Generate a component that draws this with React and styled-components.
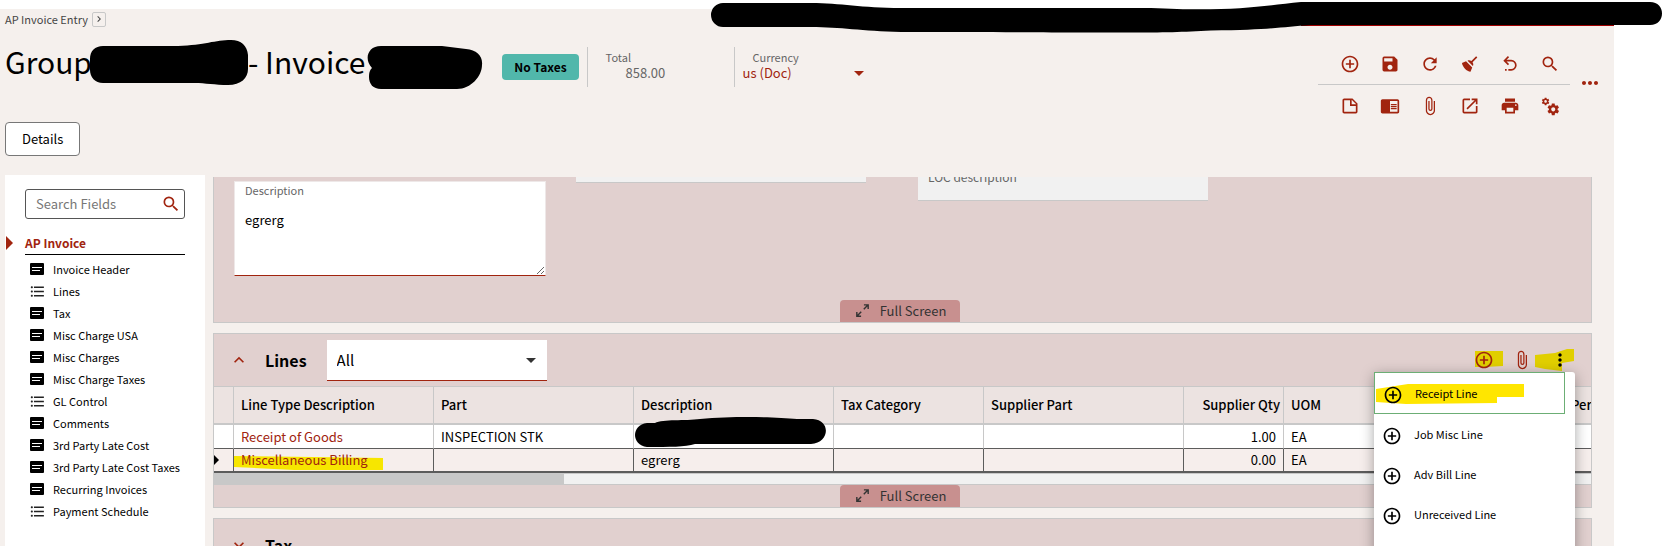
import React from 'react';
import styled, { createGlobalStyle, css } from 'styled-components';
import {
    MdAddCircleOutline,
    MdArrowDropDown,
    MdAttachFile,
    MdChevronRight,
    MdChromeReaderMode,
    MdExpandLess,
    MdExpandMore,
    MdFormatListBulleted,
    MdMoreHoriz,
    MdMoreVert,
    MdOpenInNew,
    MdPrint,
    MdRefresh,
    MdSave,
    MdSearch,
} from 'react-icons/md';

const red = '#a1240f';
const rose = '#e1d0cf';
const line = '#c8c8c8';

const GlobalStyle = createGlobalStyle`
    * {
        box-sizing: border-box;
    }
    body {
        margin: 0;
        background: #fff;
        color: #000;
        font-family: "Noto Sans CJK SC", "Noto Sans", sans-serif;
        font-size: 13px;
        line-height: 16px;
    }
    button, input, select, textarea {
        font: inherit;
        color: inherit;
    }
    button {
        padding: 0;
        border: 0;
        background: none;
        cursor: pointer;
    }
    svg {
        display: block;
        flex: none;
    }
`

/* icons that the icon package has no match for */
const makeIcon = (d) => ({ size = 20 }) => (
    <svg width={size} height={size} viewBox="0 0 24 24" fill="currentColor" aria-hidden="true">
        <path d={d} />
    </svg>
);

const BroomIcon = makeIcon('M19.36,2.72L20.78,4.14L15.06,9.85C16.13,11.39 16.28,13.24 15.38,14.44L9.06,8.12C10.26,7.22 12.11,7.37 13.65,8.44L19.36,2.72M5.93,17.57C3.92,15.56 2.69,13.16 2.35,10.92L7.23,8.83L14.67,16.27L12.58,21.15C10.34,20.81 7.94,19.58 5.93,17.57Z');
const UndoIcon = makeIcon('M13.5,7A6.5,6.5 0 0,1 20,13.5A6.5,6.5 0 0,1 13.5,20H10V18H13.5C16,18 18,16 18,13.5C18,11 16,9 13.5,9H7.83L10.91,12.09L9.5,13.5L4,8L9.5,2.5L10.92,3.91L7.83,7H13.5M6,18H8V20H6V18Z');
const NoteIcon = makeIcon('M14,10H19.5L14,4.5V10M5,3H15L21,9V19A2,2 0 0,1 19,21H5C3.89,21 3,20.1 3,19V5C3,3.89 3.89,3 5,3M5,5V19H19V12H12V5H5Z');
const CogsIcon = makeIcon('M15.9,18.45C17.25,18.45 18.35,17.35 18.35,16C18.35,14.65 17.25,13.55 15.9,13.55C14.54,13.55 13.45,14.65 13.45,16C13.45,17.35 14.54,18.45 15.9,18.45M21.1,16.68L22.58,17.84C22.71,17.95 22.75,18.13 22.66,18.29L21.26,20.71C21.17,20.86 21,20.92 20.83,20.86L19.09,20.16C18.73,20.44 18.33,20.67 17.91,20.85L17.64,22.7C17.62,22.87 17.47,23 17.3,23H14.5C14.32,23 14.18,22.87 14.15,22.7L13.89,20.85C13.46,20.67 13.07,20.44 12.71,20.16L10.96,20.86C10.81,20.92 10.62,20.86 10.54,20.71L9.14,18.29C9.05,18.13 9.09,17.95 9.22,17.84L10.7,16.68L10.65,16L10.7,15.31L9.22,14.16C9.09,14.05 9.05,13.86 9.14,13.71L10.54,11.29C10.62,11.13 10.81,11.07 10.96,11.13L12.71,11.84C13.07,11.56 13.46,11.32 13.89,11.15L14.15,9.29C14.18,9.13 14.32,9 14.5,9H17.3C17.47,9 17.62,9.13 17.64,9.29L17.91,11.15C18.33,11.32 18.73,11.56 19.09,11.84L20.83,11.13C21,11.07 21.17,11.13 21.26,11.29L22.66,13.71C22.75,13.86 22.71,14.05 22.58,14.16L21.1,15.31L21.15,16L21.1,16.68M6.69,8.07C7.56,8.07 8.26,7.37 8.26,6.5C8.26,5.63 7.56,4.92 6.69,4.92A1.58,1.58 0 0,0 5.11,6.5C5.11,7.37 5.82,8.07 6.69,8.07M10.03,6.94L11,7.68C11.07,7.75 11.09,7.87 11.03,7.97L10.13,9.53C10.08,9.63 9.96,9.67 9.86,9.63L8.74,9.18L8,9.62L7.81,10.81C7.79,10.92 7.7,11 7.59,11H5.79C5.67,11 5.58,10.92 5.56,10.81L5.4,9.62L4.64,9.18L3.52,9.63C3.41,9.67 3.3,9.63 3.24,9.53L2.34,7.97C2.28,7.87 2.31,7.75 2.39,7.68L3.34,6.94L3.31,6.5L3.34,6.06L2.39,5.32C2.31,5.25 2.28,5.13 2.34,5.03L3.24,3.47C3.3,3.37 3.41,3.33 3.52,3.38L4.63,3.82L5.4,3.38L5.56,2.19C5.58,2.08 5.67,2 5.79,2H7.59C7.7,2 7.79,2.08 7.81,2.19L8,3.38L8.74,3.82L9.86,3.38C9.96,3.33 10.08,3.37 10.13,3.47L11.03,5.03C11.09,5.13 11.07,5.25 11,5.32L10.03,6.06L10.06,6.5L10.03,6.94Z');
const ExpandIcon = makeIcon('M10,21V19H6.41L10.91,14.5L9.5,13.09L5,17.59V14H3V21H10M14.5,10.91L19,6.41V10H21V3H14V5H17.59L13.09,9.5L14.5,10.91Z');

const CardIcon = () => (
    <svg width="14" height="12" viewBox="0 0 14 12" aria-hidden="true">
        <rect width="14" height="12" rx="1" fill="#000" />
        <path d="M2 4.500h10M2 7.500h8" stroke="#fff" />
    </svg>
);

const topTools = [
    ['New', MdAddCircleOutline],
    ['Save', MdSave],
    ['Refresh', MdRefresh],
    ['Clear', BroomIcon],
    ['Undo', UndoIcon],
    ['Search', MdSearch],
];
const bottomTools = [
    ['Memo', NoteIcon],
    ['Reader', MdChromeReaderMode],
    ['Attachments', MdAttachFile],
    ['Open in new window', MdOpenInNew],
    ['Print', MdPrint],
    ['Settings', CogsIcon],
];

const sections = [
    { name: 'Invoice Header' },
    { name: 'Lines', list: true },
    { name: 'Tax' },
    { name: 'Misc Charge USA' },
    { name: 'Misc Charges' },
    { name: 'Misc Charge Taxes' },
    { name: 'GL Control', list: true },
    { name: 'Comments' },
    { name: '3rd Party Late Cost' },
    { name: '3rd Party Late Cost Taxes' },
    { name: 'Recurring Invoices' },
    { name: 'Payment Schedule', list: true },
];

const menuLines = ['Receipt Line', 'Job Misc Line', 'Adv Bill Line', 'Unreceived Line'];

export default function App() {
    return (
        <Page>
            <GlobalStyle />
            <TopRedaction width="951" height="36" viewBox="0 0 951 36" aria-hidden="true">
                <path d="M590 25.5H903" stroke="#a00000" />
                <path d="M12 3H100C130 3 150 8 190 8H440C520 12 550 6 590 2H939C955 2 955 25 939 25H600C570 27 560 30 500 30.500C440 34 420 32 190 32C150 31 130 27 100 27H12A12 12 0 0 1 12 3Z" />
            </TopRedaction>
            <Shell>
                <Header />
                <Body>
                    <Sidebar />
                    <Main>
                        <InvoicePanel />
                        <LinesPanel />
                        <Panel>
                            <PanelHeader>
                                <Toggle aria-label="Expand Tax"><MdExpandMore size={20} /></Toggle>
                                <PanelTitle>Tax</PanelTitle>
                            </PanelHeader>
                        </Panel>
                    </Main>
                </Body>
            </Shell>
        </Page>
    );
}

const Page = styled.div`
    position: relative;
    display: flex;
    height: 100vh;
    overflow: hidden;
    padding: 9px 48px 0 0;
`
const TopRedaction = styled.svg`
    position: absolute;
    top: 0;
    right: 0;
    z-index: 5;
`
const Shell = styled.div`
    display: flex;
    flex: 1;
    flex-direction: column;
    min-width: 0;
    background: #f5f0ed;
`

const Header = () => (
    <HeaderBox>
        <HeaderLeft>
            <Breadcrumb>
                AP Invoice Entry
                <CrumbButton aria-label="Show path"><MdChevronRight size={12} /></CrumbButton>
            </Breadcrumb>
            <TitleRow>
                <Title>
                    <span>Group</span>
                    <TitleRedaction width="158" height="54" viewBox="0 0 158 54" aria-hidden="true">
                        <path d="M13 6H88C115 5 125 0 141 0C153 0 159 8 158 20V29C158 38 151 45 138 45C125 45 115 43 105 43H13C5 43 0 37 0 30V19C0 11 5 6 13 6Z" />
                    </TitleRedaction>
                    <span>- Invoice</span>
                    <TitleRedaction $apart width="116" height="54" viewBox="0 0 116 54" aria-hidden="true">
                        <path d="M14 6H75L99 9C110 10 116 16 115 25C115 36 104 49 90 49H14C6 49 2 44 2 37C2 32 3 30 5 28C-3 20 0 6 14 6Z" />
                    </TitleRedaction>
                </Title>
                <Badge>No Taxes</Badge>
                <Fact>
                    <FactLabel>Total</FactLabel>
                    <FactValue>858.00</FactValue>
                </Fact>
                <Fact>
                    <FactLabel as="label" htmlFor="currency">Currency</FactLabel>
                    <CurrencyBox>
                        <CurrencySelect id="currency"><option>us (Doc)</option></CurrencySelect>
                        <MdArrowDropDown size={24} />
                    </CurrencyBox>
                </Fact>
            </TitleRow>
            <DetailsButton>Details</DetailsButton>
        </HeaderLeft>
        <Tools>
            <ToolRows>
                <ToolRow>
                    {topTools.map(([name, Icon]) => (
                        <ToolButton key={name} aria-label={name}><Icon size={20} /></ToolButton>
                    ))}
                </ToolRow>
                <ToolRow $divided>
                    {bottomTools.map(([name, Icon]) => (
                        <ToolButton key={name} aria-label={name}><Icon size={20} /></ToolButton>
                    ))}
                </ToolRow>
            </ToolRows>
            <MoreButton aria-label="More"><MdMoreHoriz size={24} /></MoreButton>
        </Tools>
    </HeaderBox>
);

const HeaderBox = styled.header`
    display: flex;
    justify-content: space-between;
    align-items: flex-start;
    padding: 2px 12px 19px 5px;
`
const HeaderLeft = styled.div`
    display: flex;
    flex-direction: column;
    align-items: flex-start;
`
const Breadcrumb = styled.nav`
    display: flex;
    align-items: center;
    gap: 4px;
    color: #444;
    font-size: 11px;
`
const CrumbButton = styled.button`
    display: grid;
    place-items: center;
    width: 14px;
    height: 15px;
    border: 1px solid ${line};
    border-radius: 2px;
`
const TitleRow = styled.div`
    display: flex;
    align-items: center;
    height: 40px;
    margin: 20px 0 35px;
`
const Title = styled.h1`
    display: flex;
    align-items: center;
    margin: 0 19px 0 0;
    font-size: 30px;
    font-weight: 400;
    line-height: 30px;
    white-space: nowrap;
    span {
        padding-bottom: 12px;
    }
`
const TitleRedaction = styled.svg`
    z-index: 1;
    margin-left: ${(props) => (props.$apart ? 2 : -2)}px;
`
const Badge = styled.span`
    margin-right: 8px;
    padding: 5px 12px;
    border-radius: 4px;
    background: #51b7ab;
    font-size: 12px;
    font-weight: 700;
`
const Fact = styled.div`
    display: flex;
    flex-direction: column;
    width: 147px;
    height: 40px;
    padding: 3px 8px;
    border-left: 1px solid ${line};
    color: #666;
`
const FactLabel = styled.span`
    padding-left: 10px;
    font-size: 11px;
    line-height: 14px;
`
const FactValue = styled.span`
    padding-left: 30px;
    line-height: 18px;
`
const CurrencyBox = styled.div`
    display: flex;
    align-items: center;
    height: 18px;
    color: ${red};
`
const CurrencySelect = styled.select`
    width: 104px;
    padding: 0;
    border: 0;
    background: none;
    appearance: none;
`
const DetailsButton = styled.button`
    padding: 8px 16px;
    border: 1px solid #777;
    border-radius: 4px;
    background: #fff;
`
const Tools = styled.div`
    display: flex;
    align-items: center;
    gap: 8px;
    padding-top: 32px;
    color: ${red};
`
const ToolRows = styled.div`
    display: flex;
    flex-direction: column;
`
const ToolRow = styled.div`
    display: flex;
    padding-left: 12px;
    border-top: ${(props) => (props.$divided ? `1px solid ${line}` : '0')};
`
const ToolButton = styled.button`
    display: grid;
    place-items: center;
    width: 40px;
    height: 41px;
`
const MoreButton = styled.button`
    width: 24px;
    height: 24px;
    margin-bottom: 4px;
`

const Body = styled.div`
    display: flex;
    flex: 1;
    min-height: 0;
`

const Sidebar = () => (
    <SideBox>
        <SearchBox>
            <SearchInput aria-label="Search Fields" placeholder="Search Fields" />
            <MdSearch size={20} />
        </SearchBox>
        <SideTitle href="#ap-invoice">
            <svg width="7" height="14" viewBox="0 0 7 14" aria-hidden="true">
                <path d="M0 0L7 7L0 14Z" fill="currentColor" />
            </svg>
            <span>AP Invoice</span>
        </SideTitle>
        <SideList>
            {sections.map(({ name, list }) => (
                <li key={name}>
                    <SideLink href="#section">
                        <SideIcon>{list ? <MdFormatListBulleted size={17} /> : <CardIcon />}</SideIcon>
                        {name}
                    </SideLink>
                </li>
            ))}
        </SideList>
    </SideBox>
);

const SideBox = styled.aside`
    flex: none;
    width: 200px;
    margin-left: 5px;
    padding: 14px 20px 0;
    background: #fff;
`
const SearchBox = styled.div`
    display: flex;
    align-items: center;
    height: 30px;
    padding: 0 3px 0 10px;
    border: 1px solid #555;
    border-radius: 3px;
    color: ${red};
`
const SearchInput = styled.input`
    flex: 1;
    min-width: 0;
    padding: 0;
    border: 0;
    outline: 0;
    color: #333;
    &::placeholder {
        color: #777;
    }
`
const SideTitle = styled.a`
    display: flex;
    align-items: center;
    gap: 12px;
    height: 24px;
    margin: 12px 0 3px -19px;
    color: ${red};
    font-size: 12px;
    font-weight: 700;
    text-decoration: none;
    span {
        flex: 1;
        line-height: 23px;
        border-bottom: 1px solid #000;
    }
`
const SideList = styled.ul`
    margin: 0;
    padding: 0 0 0 5px;
    list-style: none;
`
const SideLink = styled.a`
    display: flex;
    align-items: center;
    gap: 9px;
    height: 22px;
    color: #000;
    font-size: 11px;
    text-decoration: none;
    white-space: nowrap;
`
const SideIcon = styled.span`
    display: flex;
    justify-content: center;
    width: 14px;
    color: #222;
`

const Main = styled.main`
    display: flex;
    flex: 1;
    flex-direction: column;
    gap: 10px;
    min-width: 0;
    padding: 2px 22px 0 8px;
`
const Panel = styled.section`
    position: relative;
    flex: none;
    border: 1px solid ${line};
    background: ${rose};
    ${(props) => props.$cut && css`
        overflow: hidden;
        border-top: 0;
    `}
`
const PanelHeader = styled.div`
    display: flex;
    align-items: center;
    height: 52px;
    padding: 0 21px 0 15px;
`
const Toggle = styled.button`
    margin-right: 16px;
    color: ${red};
`
const PanelTitle = styled.h2`
    margin: 0;
    font-size: 16px;
    font-weight: 700;
    line-height: 24px;
`
const PanelFooter = styled.div`
    display: flex;
    justify-content: center;
    padding-right: 5px;
`
const FullScreenButton = styled.button`
    display: flex;
    align-items: center;
    justify-content: center;
    gap: 9px;
    width: 120px;
    height: 22px;
    padding-bottom: 1px;
    border-radius: 4px 4px 0 0;
    background: #c8908f;
    color: #333;
`

const FullScreen = () => (
    <PanelFooter>
        <FullScreenButton><ExpandIcon size={17} />Full Screen</FullScreenButton>
    </PanelFooter>
);

const InvoicePanel = () => (
    <Panel $cut>
        <FieldGrid>
            <DescriptionField>
                <label htmlFor="description">Description</label>
                <textarea id="description" defaultValue="egrerg" />
            </DescriptionField>
            <ReadOnlyField $rows={1} />
            <ReadOnlyField $rows={2}>LOC description</ReadOnlyField>
        </FieldGrid>
        <FullScreen />
    </Panel>
);

const FieldGrid = styled.div`
    display: grid;
    grid-template-columns: repeat(4, 1fr);
    align-items: start;
    gap: 30px;
    padding: 0 19px 24px 20px;
`
const DescriptionField = styled.div`
    display: flex;
    flex-direction: column;
    height: 95px;
    margin-top: 4px;
    border: 1px solid #eee8e8;
    border-bottom-color: ${red};
    background: #fff;
    label {
        padding: 0 10px;
        color: #666;
        font-size: 11px;
    }
    textarea {
        flex: 1;
        padding: 14px 10px;
        border: 0;
        outline: 0;
        background: none;
        resize: both;
    }
`
/* scrolled up under the page header, so only the lower part shows */
const ReadOnlyField = styled.div`
    height: ${(props) => (props.$rows === 2 ? 32 : 14)}px;
    margin: -8px 22px 0 0;
    padding: 0 10px;
    border-bottom: 1px solid ${line};
    background: #f1f1f1;
    color: #666;
    font-size: 12px;
`

const LinesPanel = () => (
    <Panel>
        <PanelHeader>
            <Toggle aria-label="Collapse Lines"><MdExpandLess size={20} /></Toggle>
            <PanelTitle>Lines</PanelTitle>
            <FilterBox>
                <FilterSelect aria-label="Filter lines"><option>All</option></FilterSelect>
                <MdArrowDropDown size={24} />
            </FilterBox>
            <Actions>
                <ActionButton $red aria-label="Add line">
                    <Marker width="28" height="16" viewBox="0 0 28 16"><path d="M0 0H28V15L10 16H0Z" /></Marker>
                    <MdAddCircleOutline size={20} />
                </ActionButton>
                <ActionButton $red aria-label="Attach"><MdAttachFile size={20} /></ActionButton>
                <ActionButton aria-label="More line actions">
                    <Marker $wide width="39" height="22" viewBox="0 0 39 22"><path d="M0 6L20 4L32 0H39V12L27 14V22L10 20L0 18Z" /></Marker>
                    <MdMoreVert size={20} />
                </ActionButton>
            </Actions>
        </PanelHeader>
        <LinesTable />
        <ScrollBar><ScrollThumb /></ScrollBar>
        <FullScreen />
        <Menu>
            {menuLines.map((name, i) => (
                <MenuItem key={name} $active={i === 0}>
                    {i === 0 && (
                        <Marker $menu width="148" height="20" viewBox="0 0 148 20">
                            <path d="M0 5L32 0H148V13H121V19L30 20L0 18Z" />
                        </Marker>
                    )}
                    <MdAddCircleOutline size={20} />
                    <span>{name}</span>
                </MenuItem>
            ))}
        </Menu>
    </Panel>
);

const FilterBox = styled.div`
    display: grid;
    grid-template-columns: 1fr 28px;
    align-items: center;
    width: 220px;
    height: 41px;
    margin-left: 20px;
    border-bottom: 1px solid ${red};
    background: #fff;
    svg {
        grid-area: 1 / 2;
        color: #333;
        pointer-events: none;
    }
`
const FilterSelect = styled.select`
    grid-area: 1 / 1 / 2 / 3;
    height: 40px;
    padding: 0 10px;
    border: 0;
    background: none;
    font-size: 15px;
    appearance: none;
`
const Actions = styled.div`
    display: flex;
    gap: 18px;
    margin-left: auto;
`
const ActionButton = styled.button`
    position: relative;
    width: 20px;
    height: 20px;
    color: ${(props) => (props.$red ? red : '#000')};
    > svg:last-child {
        position: relative;
    }
`
const Marker = styled.svg`
    position: absolute;
    top: ${(props) => (props.$menu ? 11 : props.$wide ? -1 : 1)}px;
    left: ${(props) => (props.$wide ? -15 : 1)}px;
    fill: ${(props) => (props.$menu ? '#ffe600' : '#e1cf00')};
`
const Menu = styled.div`
    position: absolute;
    top: 38px;
    right: 16px;
    z-index: 3;
    width: 201px;
    padding: 0 10px 24px 0;
    border-radius: 3px;
    background: #fff;
    box-shadow: 0 3px 14px rgba(0, 0, 0, 0.35);
`
const MenuItem = styled.button`
    position: relative;
    display: flex;
    align-items: center;
    gap: 12px;
    width: 100%;
    height: ${(props) => (props.$active ? 42 : 40)}px;
    padding: 4px 8px 0;
    border: ${(props) => (props.$active ? '1px solid #6cae75' : '0')};
    font-size: 11px;
    text-align: left;
    > svg:not(${Marker}), span {
        position: relative;
    }
    span {
        padding-bottom: 5px;
    }
`

const LinesTable = () => (
    <TableScroll>
        <Table>
            <colgroup>
                {[20, 200, 200, 200, 150, 200, 100, 100, 180].map((w, i) => <Col key={i} $w={w} />)}
                <col />
            </colgroup>
            <thead>
                <tr>
                    <Th />
                    <Th>Line Type Description</Th>
                    <Th>Part</Th>
                    <Th>Description</Th>
                    <Th>Tax Category</Th>
                    <Th>Supplier Part</Th>
                    <Th $right>Supplier Qty</Th>
                    <Th>UOM</Th>
                    <Th />
                    <Th>Per</Th>
                </tr>
            </thead>
            <tbody>
                <tr>
                    <Td />
                    <Td><LineLink href="#receipt">Receipt of Goods</LineLink></Td>
                    <Td>INSPECTION STK</Td>
                    <Td>
                        <CellRedaction width="192" height="30" viewBox="0 0 192 30" aria-hidden="true">
                            <path d="M12 6H20C28 2 50 4 65 2C100-1 140 0 162 2H178C196 3 195 26 176 27H60C50 30 35 30 12 30C-4 28-4 8 12 6Z" />
                        </CellRedaction>
                    </Td>
                    <Td />
                    <Td />
                    <Td $right>1.00</Td>
                    <Td>EA</Td>
                    <Td />
                    <Td />
                </tr>
                <tr>
                    <Td $selected>
                        <RowArrow width="5" height="10" viewBox="0 0 5 10"><path d="M0 0L5 5L0 10Z" /></RowArrow>
                    </Td>
                    <Td $selected>
                        <LineLink href="#misc">
                            <RowMarker width="149" height="14" viewBox="0 0 149 14" aria-hidden="true">
                                <path d="M0 0L80 1L149 2V14L60 14L0 11Z" />
                            </RowMarker>
                            <span>Miscellaneous Billing</span>
                        </LineLink>
                    </Td>
                    <Td $selected />
                    <Td $selected>egrerg</Td>
                    <Td $selected />
                    <Td $selected />
                    <Td $selected $right>0.00</Td>
                    <Td $selected>EA</Td>
                    <Td $selected />
                    <Td $selected />
                </tr>
            </tbody>
        </Table>
    </TableScroll>
);

const TableScroll = styled.div`
    overflow: hidden;
`
const Table = styled.table`
    width: 100%;
    table-layout: fixed;
    border-spacing: 0;
    background: #fff;
`
const Col = styled.col`
    width: ${(props) => props.$w}px;
`
const Th = styled.th`
    height: 39px;
    padding: 0 ${(props) => (props.$right ? 3 : 0)}px 0 7px;
    border: solid ${line};
    border-width: 1px 1px 2px 0;
    background: #ece3e1;
    font-weight: 500;
    text-align: ${(props) => (props.$right ? 'right' : 'left')};
    white-space: nowrap;
    &:last-child {
        border-right: 0;
    }
`
const Td = styled.td`
    position: relative;
    height: 24px;
    padding: 0 7px;
    border-right: 1px solid ${(props) => (props.$selected ? '#5c5c5c' : line)};
    border-bottom: ${(props) => (props.$selected ? 2 : 1)}px solid #5c5c5c;
    background: ${(props) => (props.$selected ? '#f6eeec' : '#fff')};
    text-align: ${(props) => (props.$right ? 'right' : 'left')};
    white-space: nowrap;
    &:last-child {
        border-right: 0;
    }
`
const LineLink = styled.a`
    color: ${red};
    text-decoration: none;
    span {
        position: relative;
    }
`
const CellRedaction = styled.svg`
    position: absolute;
    top: -8px;
    left: 1px;
    z-index: 1;
`
const RowMarker = styled.svg`
    position: absolute;
    top: 7px;
    left: 0;
    fill: #f7e600;
`
const RowArrow = styled.svg`
    position: absolute;
    top: 6px;
    left: 0;
`
const ScrollBar = styled.div`
    height: 12px;
    border: solid ${line};
    border-width: 1px 0;
    background: #f1f1f1;
`
const ScrollThumb = styled.div`
    width: 350px;
    height: 10px;
    background: ${line};
`
